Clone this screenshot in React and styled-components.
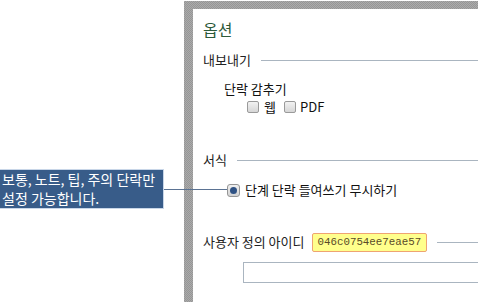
import React from "react";
import styled, { createGlobalStyle } from "styled-components";

const Global = createGlobalStyle`
  html, body { margin: 0; padding: 0; background: #fff; overflow: hidden; }
  body { font-family: "Noto Sans CJK KR", "Noto Sans", sans-serif; color: #111; }
`;

const Page = styled.div`
  position: relative;
  width: 478px;
  height: 302px;
  overflow: hidden;
  padding: 1px 0 0 184px;
  box-sizing: border-box;
`;

const Frame = styled.div`
  width: 340px;
  min-height: 330px;
  padding: 8px 0 0 9px;
  box-sizing: border-box;
  background-color: #a2a2a2;
  background-image: repeating-conic-gradient(#969696 0 25%, #ababab 0 50%);
  background-size: 2px 2px;
  display: flex;
`;

const Sheet = styled.div`
  flex: 1;
  background: #fff;
  padding: 10px 0 0 10px;
  display: flex;
  flex-direction: column;
  min-height: 330px;
`;

const Title = styled.div`
  font-size: 16px;
  line-height: 20px;
  height: 20px;
  color: #2d5a3a;
`;

const SectionHead = styled.div`
  display: flex;
  align-items: center;
  gap: 10px;
  height: 16px;
  margin-top: ${(p) => p.$mt}px;
  font-size: 13px;
  line-height: 16px;
  color: #222;
`;

const Rule = styled.div`
  flex: 1;
  height: 1px;
  background: #aab5c0;
`;

const Label = styled.div`
  height: 16px;
  line-height: 16px;
  font-size: 13px;
  margin-top: ${(p) => p.$mt}px;
  padding-left: ${(p) => p.$indent}px;
  color: #111;
`;

const OptionRow = styled.div`
  display: flex;
  align-items: center;
  height: 16px;
  margin-top: ${(p) => p.$mt}px;
  padding-left: ${(p) => p.$indent}px;
  font-size: 13px;
  line-height: 16px;
  color: #111;
`;

const Check = styled.span`
  width: 10px;
  height: 10px;
  border: 1px solid #9a9a9a;
  border-radius: 2px;
  background: linear-gradient(#f2f2f2, #d6d6d6);
  margin-right: ${(p) => p.$gap}px;
  flex: none;
`;

const OptText = styled.span`
  margin-right: ${(p) => p.$gap || 0}px;
`;

const Radio = styled.span`
  width: 11px;
  height: 11px;
  border: 1px solid #959595;
  border-radius: 3px;
  background: linear-gradient(#f0f0f0, #d2d2d2);
  margin-right: 5px;
  display: flex;
  align-items: center;
  justify-content: center;
  flex: none;
  &::after {
    content: "";
    width: 7px;
    height: 7px;
    border-radius: 50%;
    background: #2f5284;
  }
`;

const IdRow = styled.div`
  display: flex;
  align-items: center;
  height: 20px;
  margin-top: ${(p) => p.$mt}px;
  font-size: 13px;
  line-height: 16px;
  color: #222;
`;

const IdBadge = styled.span`
  margin-left: 7px;
  margin-right: 10px;
  height: 17px;
  line-height: 17px;
  padding: 0 5px 0 5px;
  background: #ffff8c;
  border: 1px solid #eea472;
  border-radius: 2px;
  font-family: "Liberation Mono", "DejaVu Sans Mono", monospace;
  font-size: 10.8px;
  color: #5a4a28;
`;

const TextBox = styled.div`
  margin-top: 10px;
  margin-left: 40px;
  width: 280px;
  height: 19px;
  border: 1px solid #aab5c0;
  flex: none;
`;

const Tip = styled.div`
  position: absolute;
  left: 0;
  top: 169px;
  width: 161px;
  height: 38px;
  padding: 0 0 0 2px;
  box-sizing: content-box;
  background: #385c89;
  border: 1px solid #c8d6e8;
  border-left: none;
  color: #fff;
  font-size: 14px;
  line-height: 19px;
  white-space: nowrap;
  overflow: hidden;
`;

const Leader = styled.div`
  position: absolute;
  left: 164px;
  top: 189px;
  width: 63px;
  height: 1px;
  background: #5b7393;
`;

export default function App() {
  return (
    <>
      <Global />
      <Page>
        <Frame>
          <Sheet>
            <Title>옵션</Title>
            <SectionHead $mt={13}>
              <span>내보내기</span>
              <Rule />
            </SectionHead>
            <Label $mt={13} $indent={21}>단락 감추기</Label>
            <OptionRow $mt={2} $indent={44}>
              <Check $gap={5} />
              <OptText $gap={8}>웹</OptText>
              <Check $gap={4} />
              <OptText>PDF</OptText>
            </OptionRow>
            <SectionHead $mt={37}>
              <span>서식</span>
              <Rule />
            </SectionHead>
            <OptionRow $mt={14} $indent={24}>
              <Radio />
              <OptText>단계 단락 들여쓰기 무시하기</OptText>
            </OptionRow>
            <IdRow $mt={34}>
              <span>사용자 정의 아이디</span>
              <IdBadge>046c0754ee7eae57</IdBadge>
              <Rule />
            </IdRow>
            <TextBox />
          </Sheet>
        </Frame>
        <Tip>
          보통, 노트, 팁, 주의 단락만
          <br />
          설정 가능합니다.
        </Tip>
        <Leader />
      </Page>
    </>
  );
}
